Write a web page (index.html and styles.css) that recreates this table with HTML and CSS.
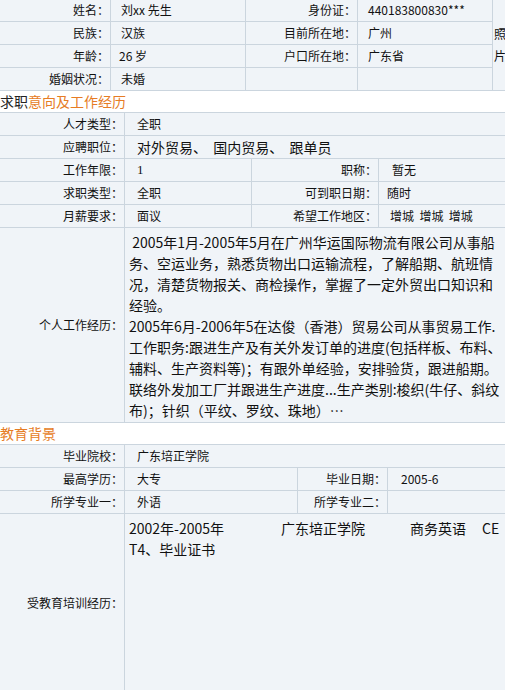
FILE: index.html
```html
<!DOCTYPE html>
<html lang="zh-CN">
<head>
<meta charset="utf-8">
<title>简历</title>
<link rel="stylesheet" href="styles.css">
</head>
<body>
<div class="page">
  <table class="grid basic">
    <colgroup><col class="b1"><col class="b2"><col class="b3"><col class="b4"><col class="b5"></colgroup>
    <tr>
      <td class="lbl">姓名：</td><td class="val">刘xx 先生</td>
      <td class="lbl">身份证：</td><td class="val">440183800830***</td>
      <td class="photo" rowspan="4">照片</td>
    </tr>
    <tr>
      <td class="lbl">民族：</td><td class="val">汉族</td>
      <td class="lbl">目前所在地：</td><td class="val">广州</td>
    </tr>
    <tr>
      <td class="lbl">年龄：</td><td class="val age">26 岁</td>
      <td class="lbl">户口所在地：</td><td class="val">广东省</td>
    </tr>
    <tr>
      <td class="lbl">婚姻状况：</td><td class="val">未婚</td>
      <td class="lbl"></td><td class="val"></td>
    </tr>
  </table>

  <div class="section-title"><span class="dark">求职</span>意向及工作经历</div>

  <table class="grid intent">
    <colgroup><col class="i1"><col class="i2"><col class="i3"><col class="i4"></colgroup>
    <tr><td class="lbl">人才类型：</td><td class="val v2" colspan="3">全职</td></tr>
    <tr><td class="lbl">应聘职位：</td><td class="val v2 big" colspan="3">对外贸易、&nbsp; 国内贸易、&nbsp; 跟单员</td></tr>
    <tr><td class="lbl">工作年限：</td><td class="val v2 serif">1</td><td class="lbl">职称：</td><td class="val v4a">暂无</td></tr>
    <tr><td class="lbl">求职类型：</td><td class="val v2">全职</td><td class="lbl">可到职日期：</td><td class="val v4b">随时</td></tr>
    <tr><td class="lbl">月薪要求：</td><td class="val v2">面议</td><td class="lbl">希望工作地区：</td><td class="val v4c">增城&nbsp;&nbsp;增城&nbsp;&nbsp;增城</td></tr>
    <tr class="tall-work">
      <td class="lbl">个人工作经历：</td>
      <td class="text work-text" colspan="3">&nbsp;2005年1月-2005年5月在广州华运国际物流有限公司从事船<br>务、空运业务，熟悉货物出口运输流程，了解船期、航班情<br>况，清楚货物报关、商检操作，掌握了一定外贸出口知识和<br>经验。<br>2005年6月-2006年5在达俊（香港）贸易公司从事贸易工作.<br>工作职务:跟进生产及有关外发订单的进度(包括样板、布料、<br>辅料、生产资料等)；有跟外单经验，安排验货，跟进船期。<br>联络外发加工厂并跟进生产进度...生产类别:梭织(牛仔、斜纹<br>布)；针织（平纹、罗纹、珠地）⋯</td>
    </tr>
  </table>

  <div class="section-title">教育背景</div>

  <table class="grid edu">
    <colgroup><col class="e1"><col class="e2"><col class="e3"><col class="e4"></colgroup>
    <tr><td class="lbl">毕业院校：</td><td class="val v2" colspan="3">广东培正学院</td></tr>
    <tr><td class="lbl">最高学历：</td><td class="val v2">大专</td><td class="lbl">毕业日期：</td><td class="val v4d">2005-6</td></tr>
    <tr><td class="lbl">所学专业一：</td><td class="val v2">外语</td><td class="lbl">所学专业二：</td><td class="val"></td></tr>
    <tr class="tall-edu">
      <td class="lbl">受教育培训经历：</td>
      <td class="text edu-text" colspan="3"><span class="seg s1">2002年-2005年</span><span class="seg s2">广东培正学院</span><span class="seg s3">商务英语</span>CET4、毕业证书</td>
    </tr>
  </table>
</div>
</body>
</html>
```
FILE: styles.css
```css
html, body {
  margin: 0;
  padding: 0;
  background: #ffffff;
}
body {
  font-family: "Noto Sans CJK SC", "Noto Sans", sans-serif;
  color: #111;
}
.page {
  width: 505px;
  overflow: hidden;
}
.grid {
  border-collapse: collapse;
  table-layout: fixed;
  margin-left: -1px;
  width: 507px;
}
.grid td {
  border: 1px solid #cbd5de;
  background: #f0f4f8;
  height: 22px;
  padding: 0;
  font-size: 12px;
  line-height: 16px;
  white-space: nowrap;
  overflow: hidden;
}
.basic { margin-top: -2px; }
.b1 { width: 111px; }
.b2 { width: 135px; }
.b3 { width: 112px; }
.b4 { width: 135px; }
.b5 { width: 14px; }

.i1 { width: 125px; }
.i2 { width: 127px; }
.i3 { width: 127px; }
.i4 { width: 128px; }

.e1 { width: 125px; }
.e2 { width: 173px; }
.e3 { width: 90px; }
.e4 { width: 119px; }

.grid td.lbl {
  text-align: right;
  padding-right: 1px;
  color: #111;
}
.grid td.val {
  padding-left: 10px;
  color: #111;
}
.grid td.age { padding-left: 8px; }
.grid td.v2 { padding-left: 12px; }
.grid td.v4a { padding-left: 13px; }
.grid td.v4b { padding-left: 8px; }
.grid td.v4c { padding-left: 11px; }
.grid td.v4d { padding-left: 13px; }
.grid td.big { font-size: 14px; }
.grid td.serif { font-family: "Liberation Serif", serif; font-size: 13px; }

.grid td.photo {
  white-space: normal;
  vertical-align: middle;
  text-align: left;
  padding: 0 0 0 1px;
  line-height: 22px;
  word-break: break-all;
  color: #111;
}

.section-title {
  height: 21px;
  line-height: 21px;
  font-size: 14px;
  color: #e67c24;
  background: #ffffff;
}
.section-title .dark { color: #222; }

.grid td.text {
  font-size: 14px;
  line-height: 21px;
  vertical-align: top;
  color: #111;
  padding: 4px 4px 4px 4px;
}
.grid td.work-text { padding-bottom: 1px; }
.tall-work td { height: 183px; }
.tall-work td.lbl { vertical-align: middle; }

.tall-edu td { height: 169px; }
.tall-edu td.lbl { vertical-align: middle; }
.grid td.edu-text {
  white-space: normal;
  word-break: break-all;
}
.seg { display: inline-block; }
.s1 { width: 152px; }
.s2 { width: 129px; }
.s3 { width: 72px; }
```
